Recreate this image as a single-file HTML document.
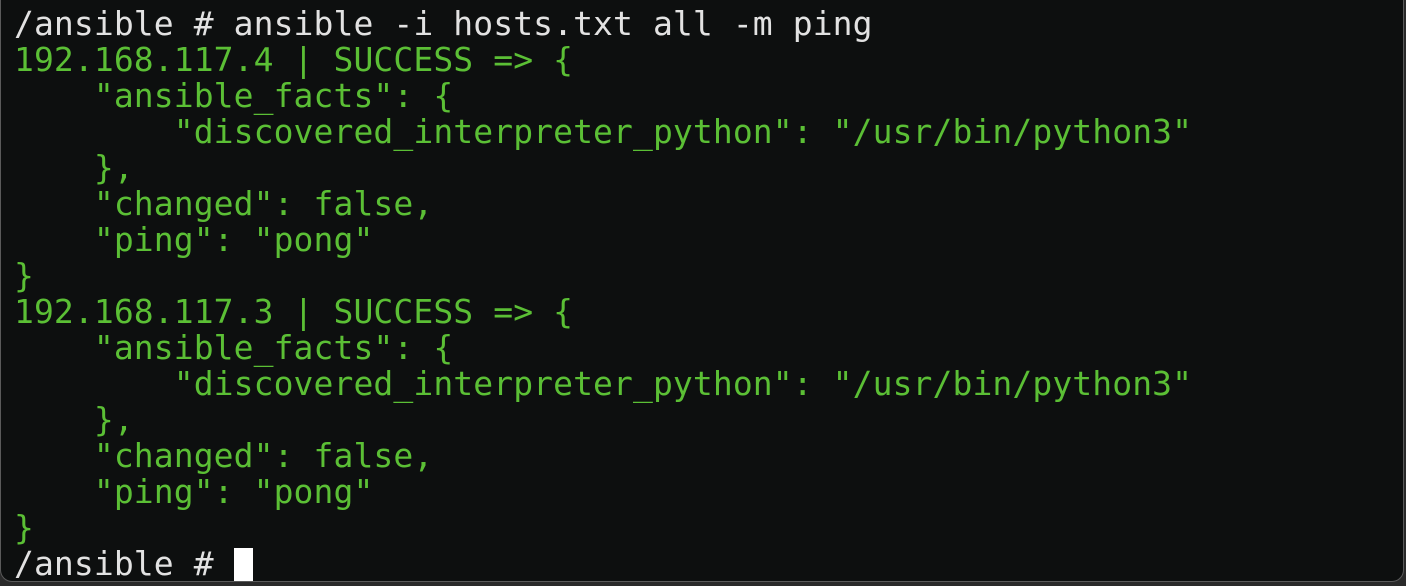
<!DOCTYPE html>
<html><head><style>
html,body{margin:0;padding:0;background:#2a2a2a;}
.t{position:absolute;left:0;top:-4px;width:1404px;height:586px;background:#0d0f0f;border:1px solid #5a5a5a;border-top:none;border-radius:0 0 12px 12px;box-sizing:border-box;overflow:hidden}
pre{margin:0;position:absolute;left:13px;top:10px;font-family:"DejaVu Sans Mono","Liberation Mono",monospace;font-size:33px;line-height:36px;color:#e2e2e2;letter-spacing:0.1px}
.g{color:#5bbf35}
.c{display:inline-block;width:19px;height:35px;background:#fff;vertical-align:-8px}
</style></head><body><div class="t"><pre>/ansible # ansible -i hosts.txt all -m ping
<span class="g">192.168.117.4 | SUCCESS =&gt; {
    "ansible_facts": {
        "discovered_interpreter_python": "/usr/bin/python3"
    },
    "changed": false,
    "ping": "pong"
}
192.168.117.3 | SUCCESS =&gt; {
    "ansible_facts": {
        "discovered_interpreter_python": "/usr/bin/python3"
    },
    "changed": false,
    "ping": "pong"
}</span>
/ansible # <span class="c"></span></pre></div></body></html>
